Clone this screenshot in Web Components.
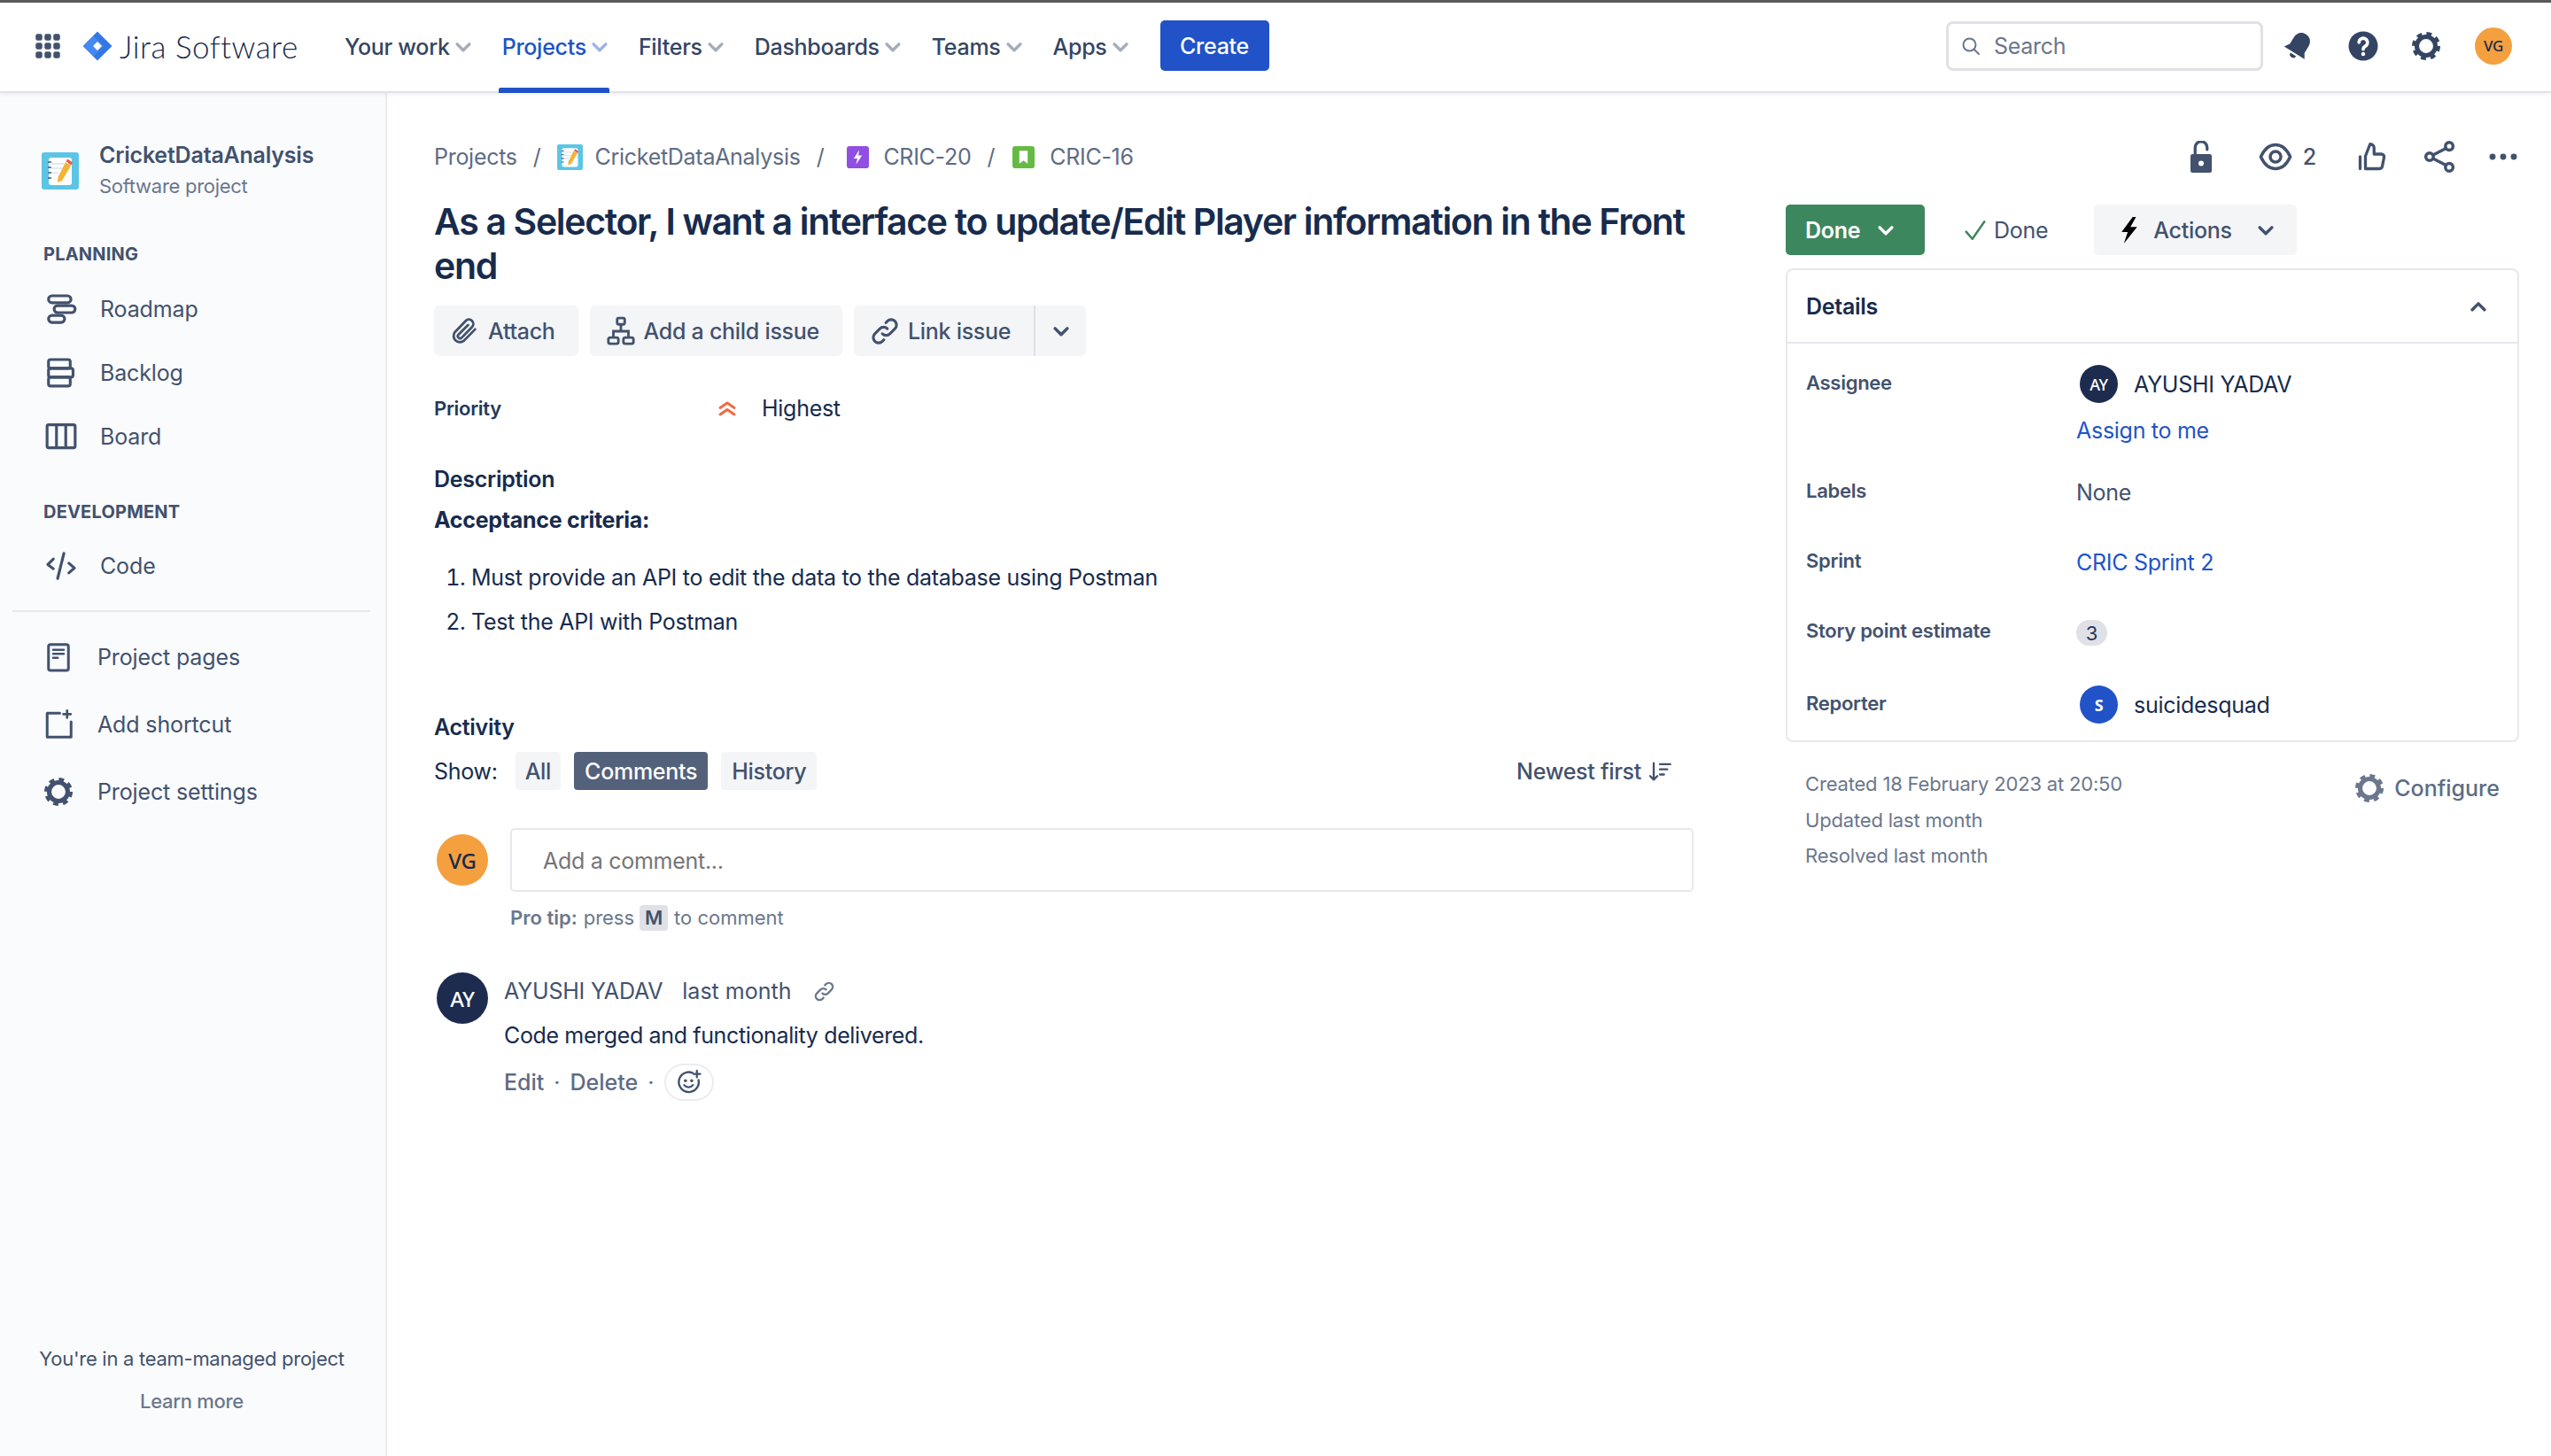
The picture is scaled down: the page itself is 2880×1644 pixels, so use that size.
<!DOCTYPE html>
<html lang="en">
<head>
<meta charset="utf-8">
<title>CRIC-16</title>
<style>
    html, body { margin: 0; height: 100%; background: #fff; }
    body { font-family: Inter, "Noto Sans", "Liberation Sans", sans-serif; color: #172b4d; overflow: hidden; letter-spacing: -.28px; }
</style>
</head>
<body>
<jira-app></jira-app>

<script>
const stroke = (d, w = 2) => `<path d="${d}" fill="none" stroke="currentColor" stroke-width="${w}" stroke-linecap="round" stroke-linejoin="round"/>`;
const gear = `<circle cx="12" cy="12" r="7" fill="none" stroke="currentColor" stroke-width="3.4"/><circle cx="12" cy="12" r="9.4" fill="none" stroke="currentColor" stroke-width="2.6" stroke-dasharray="3.9 3.48"/>`;

const ICONS = {
    chevron: stroke('M6.5 9.5l5.5 5.5 5.5-5.5', 2.8),
    chevronUp: stroke('M6.5 15l5.5-5.5 5.5 5.5', 2.8),
    search: `<circle cx="10.5" cy="10.5" r="7" fill="none" stroke="currentColor" stroke-width="2"/>` + stroke('M15.5 15.5l5.5 5.5'),
    bell: `<g transform="rotate(32 12 12)"><path fill="currentColor" d="M12 1.5c-4 0-6.5 3-6.5 7v5.5L3 18h18l-2.5-4V8.5c0-4-2.5-7-6.5-7z"/><path fill="currentColor" d="M9.5 19.5h5a2.5 2.5 0 0 1-5 0z"/></g>`,
    help: `<circle cx="12" cy="12" r="11" fill="currentColor"/><path d="M8.8 9.3a3.2 3.2 0 1 1 4.8 2.8c-1 .6-1.6 1.2-1.6 2.4" fill="none" stroke="#fff" stroke-width="2.4" stroke-linecap="round"/><circle cx="12" cy="18" r="1.5" fill="#fff"/>`,
    gear,
    waffle: [4, 12, 20].map(y => [4, 12, 20].map(x => `<rect x="${x - 3}" y="${y - 3}" width="6" height="6" rx="1.8" fill="currentColor"/>`).join('')).join(''),
    lock: `<rect x="4" y="10" width="16" height="14" rx="1.5" fill="currentColor"/><circle cx="12" cy="17" r="2" fill="#fff"/><path d="M7.5 10V5a4.5 4.5 0 0 1 9 0v1.5" fill="none" stroke="currentColor" stroke-width="2.2" stroke-linecap="round"/>`,
    eye: stroke('M1.5 12C4 6.5 7.5 3.5 12 3.5S20 6.5 22.5 12C20 17.5 16.5 20.5 12 20.5S4 17.5 1.5 12z', 2.2) + `<circle cx="12" cy="12" r="3.8" fill="none" stroke="currentColor" stroke-width="2.2"/>`,
    thumb: stroke('M3 12v9M7 21V11.5l3.5-9c1.8 0 3 1.2 3 3V10H19a2 2 0 0 1 2 2.4l-1.3 6.8A2.2 2.2 0 0 1 17.5 21z', 2.2),
    share: `<circle cx="19" cy="4.5" r="2.7" fill="none" stroke="currentColor" stroke-width="2.2"/><circle cx="5" cy="12" r="2.7" fill="none" stroke="currentColor" stroke-width="2.2"/><circle cx="19" cy="19.5" r="2.7" fill="none" stroke="currentColor" stroke-width="2.2"/>` + stroke('M7.5 10.7L16.7 6M7.5 13.3l9.2 4.7', 2.2),
    dots: `<circle cx="4" cy="12" r="2.3" fill="currentColor"/><circle cx="12" cy="12" r="2.3" fill="currentColor"/><circle cx="20" cy="12" r="2.3" fill="currentColor"/>`,
    roadmap: `<g fill="none" stroke="currentColor" stroke-width="2"><rect x="3" y="2.5" width="16" height="5" rx="2.5"/><rect x="7" y="9.5" width="15" height="5" rx="2.5"/><rect x="3" y="16.5" width="11.5" height="5" rx="2.5"/></g>`,
    backlog: `<g fill="none" stroke="currentColor" stroke-width="2"><rect x="3" y="2.5" width="15.5" height="6.3" rx="1.5"/><rect x="3" y="8.8" width="17.5" height="6.3" rx="1.5"/><rect x="3" y="15.1" width="15.5" height="6.3" rx="1.5"/></g>`,
    board: `<g fill="none" stroke="currentColor" stroke-width="2"><rect x="2" y="3.5" width="20" height="16.5" rx="1.2"/><path d="M8.7 3.5V20M15.3 3.5V20"/></g>`,
    code: stroke('M6.5 7L2.5 11l4 3M14 3L9.5 21M17.5 10l4 3.5-4 3.5', 2),
    page: `<rect x="4.5" y="2.5" width="15" height="19.5" rx="1.5" fill="none" stroke="currentColor" stroke-width="2"/>` + stroke('M8 6.5h8M8 9.5h8M8 12.5h3.5', 1.7),
    shortcut: stroke('M13 3.5H3.5V21.5H21.5V10', 2) + stroke('M18.5 1.5v5.5M15.7 4.2h5.5', 1.8),
    clip: stroke('M20 10.5l-8.8 9a5 5 0 0 1-7.1-7l8.5-8.8a3.5 3.5 0 0 1 5 4.9l-8.3 8.6a1.7 1.7 0 0 1-2.5-2.5l7.6-7.7', 2),
    child: `<g fill="none" stroke="currentColor" stroke-width="2"><rect x="9" y="1.5" width="6" height="5" rx="1.2"/><rect x="2" y="17" width="8" height="5" rx="1.5"/><rect x="14" y="17" width="8" height="5" rx="1.5"/><path d="M12 6.5v5.5M6 17v-5h12v5"/></g>`,
    link: stroke('M10 14a4.2 4.2 0 0 0 6 0l4-4a4.2 4.2 0 0 0-6-6l-1.2 1.2M14 10a4.2 4.2 0 0 0-6 0l-4 4a4.2 4.2 0 0 0 6 6l1.2-1.2', 2.2),
    sort: stroke('M6 4v16M2.5 16.5L6 20l3.5-3.5M12 5h10M12 10h7M12 15h4', 2),
    smile: stroke('M15 3.5A9 9 0 1 0 20.5 10', 1.9) + `<circle cx="8.7" cy="10.5" r="1.4" fill="currentColor"/><circle cx="14.3" cy="10.5" r="1.4" fill="currentColor"/>` + stroke('M7.5 14.5a5 5 0 0 0 8 0M19 1.5v6M16 4.5h6', 1.8),
    bolt: `<path fill="#000" d="M15 0L5 13.5h5.5L7 24 19 9h-6l5-9z"/>`,
    check: stroke('M2.5 13.5L9 21 21.5 3', 2.3),
    priority: stroke('M4 11.5l8-5.5 8 5.5', 3) + stroke('M4 19l8-5.5 8 5.5', 3),
    logo: `<path fill="#4688f1" stroke="#4688f1" stroke-linejoin="round" d="M12 1L23 12 12 23 1 12z"/><path fill="#2f70dd" d="M12 1L23 12 12 23l-3-3 8-8-8-8z" opacity=".75"/><path fill="#fff" d="M12 8.5l3.5 3.5-3.5 3.5L8.5 12z"/>`,
    notebook: `<rect width="42" height="42" rx="3" fill="#5cc5e6"/><rect x="8" y="6" width="26" height="31" rx="3" fill="#fff"/><path d="M11 13h14M11 18h12M11 23h8" stroke="#d8e4ee" stroke-width="1.5"/><path d="M7 11h4M7 17h4M7 23h4M7 29h4" stroke="#44546f" stroke-width="1.5"/><path d="M27 11l6 4-10 17-5 2 .5-6z" fill="#f5b335"/><path d="M27.5 10l2-2.5 5.5 4-1.8 3z" fill="#e5584d"/>`,
    storyBolt: `<rect width="24" height="24" rx="3" fill="#904ee2"/><path fill="#fff" d="M13.5 4L7.5 13.5h4L10 20l6.5-10h-4z"/>`,
    story: `<rect width="24" height="24" rx="3" fill="#65ba43"/><path fill="#fff" d="M7.5 5h9v14L12 15.5 7.5 19z"/>`
};

class AppIcon extends HTMLElement {
    connectedCallback() {
        const size = this.getAttribute('size') || 24;
        const color = this.getAttribute('color') || 'inherit';
        this.attachShadow({ mode: 'open' }).innerHTML = `
            <style>
                :host { display: inline-flex; align-items: center; justify-content: center; flex: none; color: ${color}; }
                svg { display: block; }
            </style>
            <svg width="${size}" height="${size}" viewBox="0 0 ${this.getAttribute('box') || 24} ${this.getAttribute('box') || 24}">${ICONS[this.getAttribute('name')]}</svg>`;
    }
}
customElements.define('app-icon', AppIcon);

class UserAvatar extends HTMLElement {
    connectedCallback() {
        const size = this.getAttribute('size') || 42;
        this.attachShadow({ mode: 'open' }).innerHTML = `
            <style>
                :host {
                    display: inline-flex; align-items: center; justify-content: center; flex: none;
                    width: ${size}px; height: ${size}px; border-radius: 50%;
                    background: ${this.getAttribute('bg') || '#1d2b4f'};
                    color: ${this.getAttribute('fg') || '#fff'};
                    font-size: ${Math.round(size * 0.42)}px; font-weight: 500; font-family: "Noto Sans", sans-serif;
                }
            </style>
            <slot></slot>`;
    }
}
customElements.define('user-avatar', UserAvatar);

class NavItem extends HTMLElement {
    constructor() {
        super();
        this.attachShadow({ mode: 'open' }).innerHTML = `
            <style>
                :host { display: flex; align-items: center; height: 103px; padding-left: 4px; position: relative; color: #344563; font-size: 25px; font-weight: 500; }
                app-icon { color: #a5adba; margin-right: -4px; }
                :host([active]) { color: #2152c8; }
                :host([active]) app-icon { color: #9db4e6; }
                :host([active])::after { content: ''; position: absolute; left: 0; right: 0; bottom: 0; height: 6px; background: #2152c8; border-radius: 2px 2px 0 0; }
            </style>
            <slot></slot><app-icon name="chevron" size="30"></app-icon>`;
    }
}
customElements.define('nav-item', NavItem);

class TopBar extends HTMLElement {
    constructor() {
        super();
        this.attachShadow({ mode: 'open' }).innerHTML = `
            <style>
                :host {
                    display: flex; align-items: center; height: 103px; box-sizing: border-box;
                    border-top: 3px solid #5a5a5a; padding: 0 44px 3px 39px; background: #fff; color: #344563;
                    box-shadow: 0 2px 0 #dfe1e6, 0 4px 4px rgba(9,30,66,.06); position: relative; z-index: 2;
                }
                .wordmark { font-size: 35px; font-family: Lato, sans-serif; font-weight: 300; color: #172b4d; margin-left: 8px; width: 200px; white-space: nowrap; letter-spacing: .5px; }
                nav { display: flex; gap: 29px; margin-left: 50px; margin-top: 3px; }
                .create { margin-left: 34px; width: 123px; height: 57px; box-sizing: border-box; background: #2152c8; color: #fff; border-radius: 5px; display: flex; align-items: center; justify-content: center; font-size: 25px; font-weight: 500; }
                .search { margin-left: auto; width: 358px; height: 56px; box-sizing: border-box; border: 3px solid #dfe1e6; border-radius: 8px; display: flex; align-items: center; gap: 14px; padding-left: 13px; color: #6b778c; font-size: 25px; }
                .ico { width: 40px; display: flex; justify-content: center; }
            </style>
            <app-icon name="waffle" size="30" color="#42526e"></app-icon>
            <app-icon name="logo" size="34" style="margin-left:24px"></app-icon>
            <span class="wordmark">Jira Software</span>
            <nav>
                <nav-item>Your work</nav-item>
                <nav-item active>Projects</nav-item>
                <nav-item>Filters</nav-item>
                <nav-item>Dashboards</nav-item>
                <nav-item>Teams</nav-item>
                <nav-item>Apps</nav-item>
            </nav>
            <div class="create">Create</div>
            <div class="search"><app-icon name="search" size="24" color="#6b778c"></app-icon>Search</div>
            <div class="ico" style="margin-left:20px"><app-icon name="bell" size="36" color="#344563"></app-icon></div>
            <div class="ico" style="margin-left:33px"><app-icon name="help" size="36" color="#344563"></app-icon></div>
            <div class="ico" style="margin-left:31px"><app-icon name="gear" size="36" color="#344563"></app-icon></div>
            <user-avatar size="42" bg="#f4a03f" fg="#172b4d" style="margin-left:35px;font-size:17px">VG</user-avatar>`;
    }
}
customElements.define('top-bar', TopBar);

class SideLink extends HTMLElement {
    connectedCallback() {
        const lower = this.hasAttribute('lower');
        this.attachShadow({ mode: 'open' }).innerHTML = `
            <style>
                :host { display: flex; align-items: center; gap: 22px; height: ${lower ? 76 : 72}px; padding-left: ${lower ? 44 : 47}px; color: #42526e; font-size: 25px; letter-spacing: -.14px; }
                .box { width: 44px; display: flex; justify-content: center; }
            </style>
            <div class="box"><app-icon name="${this.getAttribute('icon')}" size="${this.getAttribute('size') || 38}"></app-icon></div>
            <slot></slot>`;
    }
}
customElements.define('side-link', SideLink);

class SideBar extends HTMLElement {
    constructor() {
        super();
        this.attachShadow({ mode: 'open' }).innerHTML = `
            <style>
                :host { display: flex; flex-direction: column; width: 437px; height: 100%; box-sizing: border-box; background: #fafbfd; border-right: 2px solid #ebecf0; color: #42526e; }
                .project { display: flex; align-items: center; gap: 23px; padding: 57px 0 0 47px; }
                .name { font-size: 25px; font-weight: 600; line-height: 30px; white-space: nowrap; letter-spacing: -.2px; }
                .sub { font-size: 22px; line-height: 30px; margin-top: 5px; color: #6b778c; }
                h4 { margin: 0; padding-left: 49px; font-size: 20px; line-height: 24px; font-weight: 700; letter-spacing: .2px; }
                .planning { margin-top: 50px; margin-bottom: 14px; }
                .dev { margin-top: 37px; margin-bottom: 13px; }
                hr { margin: 14px 17px 13px 14px; border: 0; height: 2px; background: #e6e8ec; }
                footer { margin-top: auto; padding-bottom: 47px; text-align: center; font-size: 22px; line-height: 30px; padding-right: 2px; }
                footer div + div { margin-top: 18px; color: #6b778c; font-weight: 500; }
            </style>
            <div class="project">
                <app-icon name="notebook" size="42" box="42"></app-icon>
                <div><div class="name">CricketDataAnalysis</div><div class="sub">Software project</div></div>
            </div>
            <h4 class="planning">PLANNING</h4>
            <side-link icon="roadmap">Roadmap</side-link>
            <side-link icon="backlog">Backlog</side-link>
            <side-link icon="board">Board</side-link>
            <h4 class="dev">DEVELOPMENT</h4>
            <side-link icon="code">Code</side-link>
            <hr>
            <side-link lower icon="page" size="36">Project pages</side-link>
            <side-link lower icon="shortcut" size="36">Add shortcut</side-link>
            <side-link lower icon="gear" size="36">Project settings</side-link>
            <footer><div>You're in a team-managed project</div><div>Learn more</div></footer>`;
    }
}
customElements.define('side-bar', SideBar);

class IssueTop extends HTMLElement {
    constructor() {
        super();
        this.attachShadow({ mode: 'open' }).innerHTML = `
            <style>
                :host { display: flex; align-items: center; height: 40px; color: #5e6c84; font-size: 25px; }
                .crumbs { display: flex; align-items: center; }
                .sep { margin: 0 18px; }
                .crumbs app-icon { margin-right: 14px; }
                .acts { margin-left: auto; display: flex; align-items: center; color: #42526e; }
                .count { margin-left: 12px; font-size: 25px; font-weight: 500; }
            </style>
            <div class="crumbs">
                <span>Projects</span><span class="sep">/</span>
                <app-icon name="notebook" size="29" box="42"></app-icon><span>CricketDataAnalysis</span><span class="sep">/</span>
                <app-icon name="storyBolt" size="25" style="margin-left:8px"></app-icon><span style="margin-left:2px">CRIC-20</span><span class="sep">/</span>
                <app-icon name="story" size="25" style="margin-left:2px"></app-icon><span style="margin-left:3px">CRIC-16</span>
            </div>
            <div class="acts">
                <app-icon name="lock" size="36"></app-icon>
                <app-icon name="eye" size="38" style="margin-left:47px"></app-icon><span class="count">2</span>
                <app-icon name="thumb" size="36" style="margin-left:45px"></app-icon>
                <app-icon name="share" size="38" style="margin-left:39px"></app-icon>
                <app-icon name="dots" size="36" style="margin-left:35px"></app-icon>
            </div>`;
    }
}
customElements.define('issue-top', IssueTop);

class ToolButton extends HTMLElement {
    connectedCallback() {
        this.attachShadow({ mode: 'open' }).innerHTML = `
            <style>
                :host { display: flex; align-items: center; gap: 9px; height: 57px; padding: 0 26px 0 18px; box-sizing: border-box; background: #f4f5f7; border-radius: 6px; color: #42526e; font-size: 25px; font-weight: 500; white-space: nowrap; }
            </style>
            <app-icon name="${this.getAttribute('icon')}" size="34"></app-icon><slot></slot>`;
    }
}
customElements.define('tool-button', ToolButton);

class CommentEditor extends HTMLElement {
    constructor() {
        super();
        this.attachShadow({ mode: 'open' }).innerHTML = `
            <style>
                :host { display: block; margin-top: 43px; }
                .row { display: flex; align-items: center; gap: 25px; padding-left: 3px; }
                .field { flex: 1; height: 72px; box-sizing: border-box; border: 2px solid #e6e8ec; border-radius: 5px; padding: 2px 0 0 35px; display: flex; align-items: center; color: #757575; font-size: 25px; }
                .tip { margin: 14px 0 0 86px; display: flex; align-items: center; height: 30px; color: #6b778c; font-size: 22px; letter-spacing: 0; }
                .tip b { font-weight: 600; margin-right: 7px; }
                kbd { font: inherit; font-weight: 600; color: #42526e; background: #dfe1e6; border-radius: 4px; width: 32px; height: 29px; margin: 0 7px 0 6px; display: flex; align-items: center; justify-content: center; }
            </style>
            <div class="row">
                <user-avatar size="58" bg="#f4a03f" fg="#172b4d">VG</user-avatar>
                <div class="field">Add a comment...</div>
            </div>
            <div class="tip"><b>Pro tip:</b> press <kbd>M</kbd> to comment</div>`;
    }
}
customElements.define('comment-editor', CommentEditor);

class CommentItem extends HTMLElement {
    constructor() {
        super();
        this.attachShadow({ mode: 'open' }).innerHTML = `
            <style>
                :host { display: flex; gap: 18px; margin-top: 47px; padding-left: 3px; font-size: 25px; }
                .head { display: flex; align-items: center; height: 30px; margin-top: 6px; color: #42526e; letter-spacing: -.2px; }
                .head .when { margin: 0 25px 0 22px; letter-spacing: 0; }
                .text { margin-top: 20px; line-height: 30px; color: #172b4d; letter-spacing: -.36px; }
                .foot { display: flex; align-items: center; margin-top: 17px; height: 42px; color: #5e6c84; font-weight: 500; letter-spacing: 0; }
                .dot { margin: 0 11px; font-weight: 400; }
                .react { width: 56px; height: 42px; border: 2px solid #ebecf0; border-radius: 21px; box-sizing: border-box; display: flex; align-items: center; justify-content: center; color: #42526e; margin-left: 12px; }
            </style>
            <user-avatar size="58">AY</user-avatar>
            <div>
                <div class="head"><span>AYUSHI YADAV</span><span class="when">last month</span><app-icon name="link" size="25" color="#6b778c"></app-icon></div>
                <div class="text">Code merged and functionality delivered.</div>
                <div class="foot"><span>Edit</span><span class="dot">·</span><span>Delete</span><span class="dot" style="margin-right:0">·</span><div class="react"><app-icon name="smile" size="30"></app-icon></div></div>
            </div>`;
    }
}
customElements.define('comment-item', CommentItem);

class IssueBody extends HTMLElement {
    constructor() {
        super();
        this.attachShadow({ mode: 'open' }).innerHTML = `
            <style>
                :host { display: block; padding-top: 28px; }
                h1 { margin: 0; font-size: 41px; line-height: 50px; font-weight: 600; letter-spacing: -1.33px; color: #172b4d; }
                .tools { display: flex; gap: 13px; margin-top: 20px; }
                .link { border-radius: 6px 0 0 6px; }
                .more { width: 59px; height: 57px; box-sizing: border-box; margin-left: -13px; background: #f4f5f7; border-left: 2px solid #dfe1e6; border-radius: 0 6px 6px 0; display: flex; align-items: center; justify-content: center; color: #42526e; }
                .priority { display: flex; align-items: center; height: 40px; margin-top: 39px; font-size: 25px; }
                .priority b { width: 319px; font-size: 22px; font-weight: 600; color: #253858; }
                .priority span { margin-left: 27px; }
                h3 { margin: 0; font-size: 25px; line-height: 30px; font-weight: 600; color: #172b4d; }
                .desc { margin-top: 45px; }
                .crit { margin-top: 16px; font-weight: 700; }
                ol { margin: 25px 0 0; padding: 0 0 0 42px; font-size: 25px; line-height: 50px; }
                .act { margin-top: 79px; }
                .show { display: flex; align-items: center; margin-top: 13px; height: 43px; font-size: 25px; }
                .pill { height: 43px; box-sizing: border-box; padding: 0 12px; margin-left: 15px; display: flex; align-items: center; border-radius: 4px; background: #f4f5f7; color: #42526e; font-weight: 500; }
                .pill.on { background: #54617b; color: #fff; }
                .pill.first { margin-left: 20px; padding: 0 11px; }
                .sort { margin-left: auto; margin-right: 24px; display: flex; align-items: center; gap: 7px; color: #42526e; font-weight: 500; }
            </style>
            <h1>As a Selector, I want a interface to update/Edit Player information in the Front end</h1>
            <div class="tools">
                <tool-button icon="clip">Attach</tool-button>
                <tool-button icon="child">Add a child issue</tool-button>
                <tool-button icon="link" class="link">Link issue</tool-button>
                <div class="more"><app-icon name="chevron" size="30"></app-icon></div>
            </div>
            <div class="priority"><b>Priority</b><app-icon name="priority" size="24" color="#ef6a45"></app-icon><span>Highest</span></div>
            <h3 class="desc">Description</h3>
            <h3 class="crit">Acceptance criteria:</h3>
            <ol><li>Must provide an API to edit the data to the database using Postman</li><li>Test the API with Postman</li></ol>
            <h3 class="act">Activity</h3>
            <div class="show">
                <span>Show:</span>
                <div class="pill first">All</div><div class="pill on">Comments</div><div class="pill">History</div>
                <div class="sort">Newest first<app-icon name="sort" size="28"></app-icon></div>
            </div>
            <comment-editor></comment-editor>
            <comment-item></comment-item>`;
    }
}
customElements.define('issue-body', IssueBody);

class DetailRow extends HTMLElement {
    connectedCallback() {
        this.attachShadow({ mode: 'open' }).innerHTML = `
            <style>
                :host { display: grid; grid-template-columns: 305px 1fr; align-items: center; min-height: ${this.getAttribute('h') || 40}px; font-size: 25px; }
                .label { font-size: 22px; font-weight: 600; color: #42526e; padding-bottom: 4px; }
            </style>
            <div class="label">${this.getAttribute('label')}</div><div><slot></slot></div>`;
    }
}
customElements.define('detail-row', DetailRow);

class IssueSide extends HTMLElement {
    constructor() {
        super();
        this.attachShadow({ mode: 'open' }).innerHTML = `
            <style>
                :host { display: block; padding-top: 34px; font-size: 25px; }
                .status { display: flex; align-items: center; height: 57px; }
                .done { width: 157px; height: 57px; box-sizing: border-box; background: #3d875e; color: #fff; border-radius: 5px; display: flex; align-items: center; padding-left: 22px; gap: 14px; font-weight: 600; }
                .state { display: flex; align-items: center; gap: 8px; margin-left: 44px; color: #42526e; }
                .actions { width: 229px; height: 57px; box-sizing: border-box; margin-left: 52px; background: #f4f5f7; border-radius: 5px; display: flex; align-items: center; padding-left: 25px; color: #42526e; font-weight: 500; }
                .actions span { margin: 0 23px 0 12px; }
                .box { margin-top: 15px; height: 535px; box-sizing: border-box; border: 2px solid #e6e8ec; border-radius: 8px; }
                .box header { height: 83px; box-sizing: border-box; display: flex; align-items: center; justify-content: space-between; padding: 0 29px 0 21px; border-bottom: 2px solid #e6e8ec; font-weight: 600; color: #172b4d; }
                .rows { padding: 24px 21px 0; }
                .user { display: flex; align-items: center; gap: 18px; color: #172b4d; padding-left: 4px; height: 43px; }
                a { color: #1f54c7; display: block; line-height: 30px; }
                .assign { margin: 16px 0 35px 305px; }
                .rows detail-row + detail-row { margin-top: 39px; }
                .rows .last { margin-top: 40px; }
                .none { color: #42526e; }
                .badge { display: inline-flex; align-items: center; justify-content: center; width: 35px; height: 29px; border-radius: 15px; background: #dfe1e6; color: #253858; font-size: 22px; }
                .meta { display: flex; justify-content: space-between; margin-top: 27px; padding: 0 22px; color: #6b778c; font-size: 22px; line-height: 40.5px; letter-spacing: -.18px; }
                .cfg { display: flex; align-items: center; gap: 10px; color: #5e6c84; font-size: 25px; font-weight: 500; height: 50px; letter-spacing: 0; }
            </style>
            <div class="status">
                <div class="done">Done<app-icon name="chevron" size="30"></app-icon></div>
                <div class="state"><app-icon name="check" size="26" color="#3d875e"></app-icon>Done</div>
                <div class="actions"><app-icon name="bolt" size="30"></app-icon><span>Actions</span><app-icon name="chevron" size="30"></app-icon></div>
            </div>
            <div class="box">
                <header>Details<app-icon name="chevronUp" size="30" color="#42526e"></app-icon></header>
                <div class="rows">
                    <detail-row label="Assignee" h="43"><div class="user"><user-avatar size="43" style="font-size:18px">AY</user-avatar>AYUSHI YADAV</div></detail-row>
                    <a class="assign">Assign to me</a>
                    <detail-row label="Labels"><span class="none">None</span></detail-row>
                    <detail-row label="Sprint"><a>CRIC Sprint 2</a></detail-row>
                    <detail-row label="Story point estimate"><span class="badge">3</span></detail-row>
                    <detail-row class="last" label="Reporter" h="43"><div class="user"><user-avatar size="43" bg="#2152c8" style="font-size:18px;font-weight:700">S</user-avatar>suicidesquad</div></detail-row>
                </div>
            </div>
            <div class="meta">
                <div><div>Created 18 February 2023 at 20:50</div><div>Updated last month</div><div>Resolved last month</div></div>
                <div class="cfg"><app-icon name="gear" size="36" color="#6b778c"></app-icon>Configure</div>
            </div>`;
    }
}
customElements.define('issue-side', IssueSide);

class JiraApp extends HTMLElement {
    constructor() {
        super();
        this.attachShadow({ mode: 'open' }).innerHTML = `
            <style>
                :host { display: flex; flex-direction: column; height: 1644px; }
                .page { flex: 1; min-height: 0; display: flex; }
                main { flex: 1; min-width: 0; padding: 54px 36px 0 53px; }
                .cols { display: grid; grid-template-columns: 1422px 828px; column-gap: 104px; }
            </style>
            <top-bar></top-bar>
            <div class="page">
                <side-bar></side-bar>
                <main>
                    <issue-top></issue-top>
                    <div class="cols">
                        <issue-body></issue-body>
                        <issue-side></issue-side>
                    </div>
                </main>
            </div>`;
    }
}
customElements.define('jira-app', JiraApp);
</script>
</body>
</html>
